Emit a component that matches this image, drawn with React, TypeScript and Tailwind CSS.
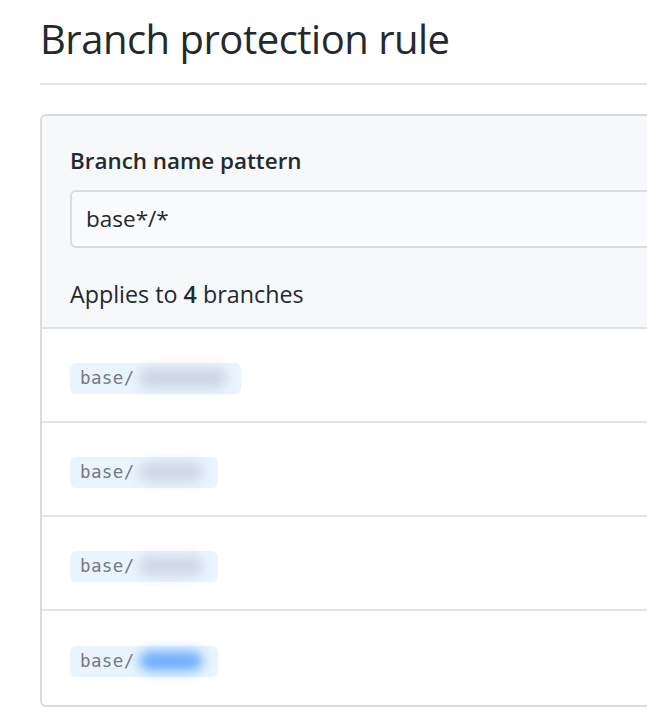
export default function App() {
  const branches = [
    { w: "w-[171px]", blob: "w-[88px] bg-[#cbd6e2]" },
    { w: "w-[148px]", blob: "w-[64px] bg-[#cdd8e3]" },
    { w: "w-[148px]", blob: "w-[64px] bg-[#cdd8e3]" },
    { w: "w-[148px]", blob: "w-[64px] bg-[#6eaefc]" },
  ];

  return (
    <div className="w-[647px] h-[721px] overflow-hidden bg-white pl-[40px] font-['Open_Sans',sans-serif] text-[#24292e]">
      {/* heading */}
      <div className="w-[700px] pt-[14px] pb-[19px] border-b-2 border-[#e1e4e8]">
        <h1 className="text-[40px] leading-[50px] font-normal tracking-[-0.5px]">Branch protection rule</h1>
      </div>

      <div className="mt-[29px] w-[700px] border-2 border-[#d8dce1] rounded-md">
        <div className="bg-[#f6f8fa] pl-[28px] pt-[30px] pb-[17px] border-b-2 border-[#dfe2e5] rounded-t-md">
          <label className="block text-[22.4px] leading-[30px] font-semibold">Branch name pattern</label>
          <div className="mt-[14px] h-[58px] border-2 border-[#d8dce1] rounded-md bg-[#fafbfc] pl-[14px] flex items-center text-[22.5px]">
            base*/*
          </div>
          <p className="mt-[30px] text-[23.3px] leading-[32px]">
            Applies to <span className="font-semibold">4</span> branches
          </p>
        </div>

        {branches.map((b, i) => (
          <div
            key={i}
            className={`h-[94px] pl-[28px] flex items-center ${i < 3 ? "border-b-2 border-[#e1e4e8]" : ""}`}
          >
            <span className={`${b.w} h-[31px] mt-[6px] rounded-md bg-[#eaf4fe] pl-[10px] flex items-center`}>
              <span className="font-['DejaVu_Sans_Mono',monospace] text-[17.5px] tracking-[0.4px] text-[#727a82]">base/</span>
              <span className={`${b.blob} h-[20px] ml-[4px] rounded-full blur-[6px]`}></span>
            </span>
          </div>
        ))}
      </div>
    </div>
  );
}
